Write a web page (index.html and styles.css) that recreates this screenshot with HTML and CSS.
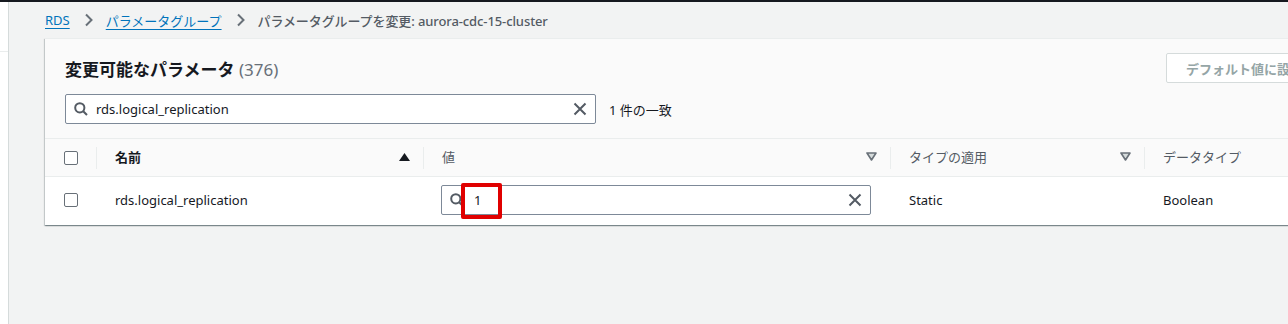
FILE: index.html
```html
<!DOCTYPE html>
<html lang="ja">
<head>
  <meta charset="UTF-8">
  <meta name="viewport" content="width=device-width, initial-scale=1.0">
  <title>パラメータグループを変更</title>
  <link rel="stylesheet" href="styles.css">
</head>
<body>
  <div class="layout">
    <!-- サイドナビ（折りたたみ） -->
    <div class="sidenav">
      <div class="sidenav-top"></div>
    </div>

    <div class="main">
      <!-- パンくず -->
      <nav class="breadcrumb">
        <a href="#">RDS</a>
        <svg class="chev" width="10" height="14" viewBox="0 0 10 14"><path d="M2 1.5 L7.5 7 L2 12.5" fill="none" stroke="#687078" stroke-width="2"/></svg>
        <a href="#">パラメータグループ</a>
        <svg class="chev" width="10" height="14" viewBox="0 0 10 14"><path d="M2 1.5 L7.5 7 L2 12.5" fill="none" stroke="#687078" stroke-width="2"/></svg>
        <span class="current">パラメータグループを変更: aurora-cdc-15-cluster</span>
      </nav>

      <div class="card">
        <div class="card-header">
          <div class="title-row">
            <h2>変更可能なパラメータ <span class="count">(376)</span></h2>
            <button class="btn" disabled>デフォルト値に設定</button>
          </div>
          <div class="filter-row">
            <div class="search">
              <svg class="search-icon" width="14" height="14" viewBox="0 0 14 14"><circle cx="5.8" cy="5.8" r="4.6" fill="none" stroke="#545b64" stroke-width="2"/><path d="M9.2 9.2 L13 13" stroke="#545b64" stroke-width="2"/></svg>
              <span class="search-text">rds.logical_replication</span>
              <svg class="clear" width="14" height="14" viewBox="0 0 14 14"><path d="M1.5 1.5 L12.5 12.5 M12.5 1.5 L1.5 12.5" stroke="#545b64" stroke-width="2"/></svg>
            </div>
            <span class="matches">1 件の一致</span>
          </div>
        </div>

        <table class="params">
          <colgroup>
            <col class="c-check">
            <col class="c-name">
            <col class="c-value">
            <col class="c-type">
            <col class="c-data">
          </colgroup>
          <thead>
            <tr>
              <th class="sep"><span class="checkbox"></span></th>
              <th class="sep">
                <div class="th-inner">名前
                  <svg width="11" height="8" viewBox="0 0 11 8"><polygon points="5.5,0 11,8 0,8" fill="#16191f"/></svg>
                </div>
              </th>
              <th class="sep">
                <div class="th-inner light">値
                  <svg width="11" height="9" viewBox="0 0 11 9"><polygon points="1,1 10,1 5.5,8" fill="#d5dbdb" stroke="#687078" stroke-width="1.6" stroke-linejoin="round"/></svg>
                </div>
              </th>
              <th class="sep">
                <div class="th-inner light">タイプの適用
                  <svg width="11" height="9" viewBox="0 0 11 9"><polygon points="1,1 10,1 5.5,8" fill="#d5dbdb" stroke="#687078" stroke-width="1.6" stroke-linejoin="round"/></svg>
                </div>
              </th>
              <th><div class="th-inner light">データタイプ</div></th>
            </tr>
          </thead>
          <tbody>
            <tr>
              <td><span class="checkbox"></span></td>
              <td>rds.logical_replication</td>
              <td>
                <div class="value-input">
                  <svg class="search-icon" width="14" height="14" viewBox="0 0 14 14"><circle cx="5.8" cy="5.8" r="4.6" fill="none" stroke="#545b64" stroke-width="2"/><path d="M9.2 9.2 L13 13" stroke="#545b64" stroke-width="2"/></svg>
                  <span class="value-text">1</span>
                  <svg class="clear" width="14" height="14" viewBox="0 0 14 14"><path d="M1.5 1.5 L12.5 12.5 M12.5 1.5 L1.5 12.5" stroke="#545b64" stroke-width="2"/></svg>
                  <span class="highlight"></span>
                </div>
              </td>
              <td>Static</td>
              <td>Boolean</td>
            </tr>
          </tbody>
        </table>
      </div>
    </div>
  </div>
</body>
</html>
```

FILE: styles.css
```css
body {
  margin: 0;
  padding: 0;
  background-color: #f2f3f3;
  border-top: 2px solid #16191f;
  font-family: "Noto Sans", "Noto Sans CJK JP", sans-serif;
  font-size: 13px;
  color: #16191f;
  overflow: hidden;
  height: 322px;
}
.layout {
  display: flex;
  height: 100%;
}
.sidenav {
  width: 8px;
  flex: none;
  background-color: #ffffff;
  border-right: 1px solid #d5dbdb;
}
.sidenav-top {
  height: 49px;
  border-bottom: 1px solid #eaeded;
}
.main {
  flex: none;
  width: 1400px;
  padding-left: 36px;
}

/* パンくず */
.breadcrumb {
  display: flex;
  align-items: center;
  height: 36px;
  font-size: 13px;
}
.breadcrumb a {
  color: #0073bb;
  text-decoration: underline;
  text-underline-offset: 3px;
}
.chev {
  margin: 0 12px 0 14px;
}
.breadcrumb .current {
  color: #545b64;
  font-weight: 500;
  letter-spacing: -0.1px;
}

/* カード */
.card {
  width: 1300px;
  background-color: #ffffff;
  box-shadow: 0 1px 1px 0 rgba(0, 28, 36, 0.3), 1px 1px 1px 0 rgba(0, 28, 36, 0.15), -1px 1px 1px 0 rgba(0, 28, 36, 0.15);
  border-top: 1px solid #eaeded;
}
.card-header {
  background-color: #fafafa;
  padding: 14px 0 14px 20px;
}
.title-row {
  display: flex;
  align-items: center;
  justify-content: space-between;
  height: 30px;
}
.title-row h2 {
  margin: 0;
  font-size: 17px;
  font-weight: 700;
}
.count {
  font-weight: 400;
  color: #687078;
}
.btn {
  width: 134px;
  height: 30px;
  margin-right: 45px;
  font-family: inherit;
  font-size: 13px;
  font-weight: 700;
  color: #95a5a6;
  background-color: #ffffff;
  border: 1px solid #d5dbdb;
  border-radius: 2px;
  text-align: left;
  padding-left: 19px;
  white-space: nowrap;
  overflow: hidden;
}
.filter-row {
  display: flex;
  align-items: center;
  margin-top: 11px;
}
.search {
  display: flex;
  align-items: center;
  box-sizing: border-box;
  width: 531px;
  height: 30px;
  padding: 0 8px;
  background-color: #ffffff;
  border: 1px solid #7d8998;
  border-radius: 2px;
}
.search-text {
  flex: 1;
  margin-left: 8px;
}
.matches {
  margin-left: 13px;
}

/* テーブル */
.params {
  border-collapse: collapse;
  table-layout: fixed;
  width: 1300px;
  border-top: 1px solid #eaeded;
}
.c-check { width: 52px; }
.c-name { width: 327px; }
.c-value { width: 467px; }
.c-type { width: 254px; }
.params th {
  height: 37px;
  background-color: #fafafa;
  border-bottom: 1px solid #eaeded;
  text-align: left;
  font-weight: 700;
  padding: 0 14px 0 18px;
  position: relative;
}
.params th.sep::after {
  content: "";
  position: absolute;
  right: 0;
  top: 8px;
  height: 22px;
  border-right: 1px solid #eaeded;
}
.th-inner {
  display: flex;
  align-items: center;
  justify-content: space-between;
  padding-bottom: 2px;
}
.th-inner.light {
  font-weight: 400;
  color: #545b64;
}
.params td {
  height: 46px;
  padding: 0 14px 2px 18px;
  background-color: #ffffff;
}
.params th:first-child, .params td:first-child {
  padding-left: 19px;
}
.params td:nth-child(3) {
  padding-left: 17px;
  padding-right: 20px;
}
.checkbox {
  display: block;
  width: 12px;
  height: 12px;
  border: 1px solid #687078;
  border-radius: 2px;
  background-color: #ffffff;
}
.value-input {
  position: relative;
  display: flex;
  align-items: center;
  box-sizing: border-box;
  height: 30px;
  padding: 0 8px;
  background-color: #ffffff;
  border: 1px solid #7d8998;
  border-radius: 2px;
}
.value-text {
  flex: 1;
  margin-left: 10px;
}
.highlight {
  position: absolute;
  left: 19px;
  top: -3px;
  width: 33px;
  height: 28px;
  border: 4px solid #e00000;
  border-radius: 2px;
}
```
